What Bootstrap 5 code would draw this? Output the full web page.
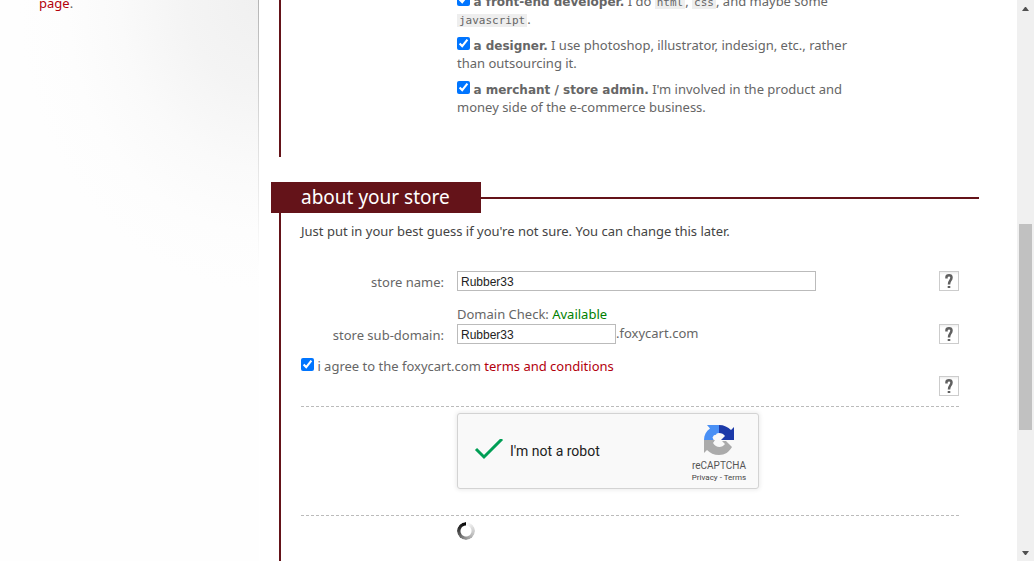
<!DOCTYPE html>
<html lang="en">
<head>
<meta charset="utf-8">
<meta name="viewport" content="width=device-width, initial-scale=1">
<title>FoxyCart - about your store</title>
<link rel="stylesheet" href="https://cdn.jsdelivr.net/npm/bootstrap@5.3.0/dist/css/bootstrap.min.css">
<style>
:root { --maroon: #641319; --red: #b3000c; }
body { font: 13px/18px "Noto Sans", Tahoma, sans-serif; color: #666; background: #fff; }
a { color: var(--red); text-decoration: none; }
strong { font-family: "DejaVu Sans", sans-serif; font-size: 12px; line-height: 12px; }
.page-shell { height: 100vh; }
.side-note { flex: 0 0 259px; padding-left: 39px; background: radial-gradient(ellipse 240px 290px at 100% 0, #f0f0f0 0, #f4f4f4 30%, #fafafa 58%, #fdfdfd 80%, #fefefe 100%); position: relative; }
.side-note p { margin-top: -6px; }
.side-note::after { content: ""; position: absolute; right: 0; top: 0; width: 1px; height: 270px; background: linear-gradient(#b5b5b5, #ddd 50%, #fff); }
.form-area { padding: 0 38px 0 20px; min-width: 0; }
.form-area form { min-height: 100%; }
.panel { border-left: 2px solid var(--maroon); padding: 0 20px; }
.panel-roles { display: flow-root; height: 157px; margin-bottom: 25px; }
.role-list { width: 400px; margin: -8px 0 0 156px; }
.role-list li { margin-bottom: 8px; }
.tick { width: 13px; height: 13px; margin: 0; vertical-align: 0; accent-color: #0075ff; }
code { font: 11px/12px "DejaVu Sans Mono", monospace; color: #666; background: #eee; padding: 0 2px; }
.panel-title { margin: 0 -20px 0 -30px; }
.panel-title h2 { width: 210px; height: 31px; margin: 0; padding-left: 30px; font-size: 19px; line-height: 31px; background: var(--maroon); color: #fff; font-weight: 400; }
.panel-title::after { content: ""; flex: 1; height: 2px; background: var(--maroon); }
.intro { color: #444; margin: 9px 0 31px; }
.field-row { display: grid; grid-template-columns: 144px 1fr 20px; column-gap: 12px; }
.field-row label { text-align: right; padding: 2px 1px 0 0; height: 20px; }
.row-name { margin-bottom: 14px; }
.row-check { margin-bottom: 1px; }
.available { color: #008000; }
.text-box { height: 20px; border: 1px solid #bbb; padding: 1px 3px 0; font: 12px "Liberation Sans", sans-serif; color: #222; }
.box-name { width: 359px; }
.box-domain { width: 159px; }
.help-btn { width: 20px; height: 20px; padding: 0; border: 1px solid #ccc; background: linear-gradient(#eee, #fff 3px); }
.help-btn svg { display: block; margin: auto; }
.agree-row { margin: 13px 0 1px; }
.help-end { margin-bottom: 10px; }
.dashed { border-top: 1px dashed #bbb; padding: 6px 0 26px 156px; }
.captcha { width: 302px; height: 76px; border: 1px solid #d3d3d3; border-radius: 3px; background: #f9f9f9; box-shadow: 0 0 4px 1px rgba(0,0,0,.08); font-family: Roboto, sans-serif; color: #222; padding-left: 16px; }
.captcha-text { font-size: 14px; padding-left: 6px; }
.captcha-brand { width: 78px; padding-top: 10px; color: #555; line-height: 12px; }
.captcha-brand svg { display: block; margin: 0 auto 4px; }
.brand-name { font-size: 10px; }
.brand-links, .brand-links a { font-size: 8px; color: #444; }
.spin-ring { width: 18px; height: 18px; border-radius: 50%; background: conic-gradient(#fff, #bbb 35%, #888 55%, #333 80%, #000); -webkit-mask: radial-gradient(circle, transparent 5px, #000 6px); mask: radial-gradient(circle, transparent 5px, #000 6px); }
.scroll-rail { flex: 0 0 17px; background: #f0f0f0; padding: 7px 0 6px; }
.rail-thumb { flex: 206; width: 13px; background: #c1c1c1; }
.rail-before { flex: 213; }
.rail-after { flex: 121; }
</style>
</head>
<body>
<svg class="d-none">
  <symbol id="question" viewBox="0 0 8 14"><path d="M1.500 4.500V3Q1.500 1.300 4 1.300T6.500 3.500Q6.500 5 5.300 6.500T4 10.500" fill="none" stroke="#606060" stroke-width="2.500"/><path d="M2.700 12h2.600v2H2.700z" fill="#606060"/></symbol>
</svg>
<div class="page-shell d-flex overflow-hidden">
  <aside class="side-note"><p class="mb-0"><a href="#">page</a>.</p></aside>
  <main class="form-area flex-grow-1 overflow-hidden">
    <form class="d-flex flex-column">
      <section class="panel panel-roles">
        <ul class="role-list list-unstyled">
          <li><input class="tick" type="checkbox" id="dev" checked> <label class="d-inline" for="dev"><strong>a front-end developer.</strong> I do <code>html</code>, <code>css</code>, and maybe some <code>javascript</code>.</label></li>
          <li><input class="tick" type="checkbox" id="des" checked> <label class="d-inline" for="des"><strong>a designer.</strong> I use photoshop, illustrator, indesign, etc., rather than outsourcing it.</label></li>
          <li><input class="tick" type="checkbox" id="mer" checked> <label class="d-inline" for="mer"><strong>a merchant / store admin.</strong> I'm involved in the product and money side of the e-commerce business.</label></li>
        </ul>
      </section>
      <section class="panel flex-grow-1">
        <div class="panel-title d-flex align-items-center"><h2>about your store</h2></div>
        <p class="intro">Just put in your best guess if you're not sure. You can change this later.</p>
        <div class="field-row row-name">
          <label for="sname">store name:</label>
          <div><input class="text-box box-name d-block" id="sname" type="text" value="Rubber33"></div>
          <button class="help-btn" type="button" aria-label="Help with store name"><svg width="8" height="14"><use href="#question"/></svg></button>
        </div>
        <div class="field-row row-check"><span></span><span>Domain Check: <span class="available">Available</span></span></div>
        <div class="field-row">
          <label for="sub">store sub-domain:</label>
          <div class="d-flex align-items-start"><input class="text-box box-domain" id="sub" type="text" value="Rubber33"><span>.foxycart.com</span></div>
          <button class="help-btn" type="button" aria-label="Help with store sub-domain"><svg width="8" height="14"><use href="#question"/></svg></button>
        </div>
        <div class="agree-row">
          <input class="tick" type="checkbox" id="agree" checked> <label class="d-inline" for="agree">i agree to the foxycart.com <a href="#">terms and conditions</a></label>
        </div>
        <div class="help-end d-flex justify-content-end"><button class="help-btn" type="button" aria-label="Help with terms"><svg width="8" height="14"><use href="#question"/></svg></button></div>
        <div class="dashed">
          <div class="captcha d-flex align-items-center">
            <svg width="30" height="24" viewBox="0 0 30 24"><path d="M2 10l8 8L28 0" fill="none" stroke="#009e55" stroke-width="3"/></svg>
            <span class="captcha-text me-auto">I'm not a robot</span>
            <div class="captcha-brand align-self-start text-center">
              <svg width="32" height="32" viewBox="0 0 32 32">
                <path d="M16 1H4l3 3.500C3 7.500 1 11 1 16h8q.5 1 2 2 0-2-1.500-4.500Q11 10 13 11q0-2 3-2z" fill="#4a90f5"/>
                <path d="M16 1c5 0 9 2 12 5l3-3v13H18l4-4q-2-3-6-3z" fill="#1c3aa9"/>
                <path d="M1 16h11l-2 3c3 5 9 5 12 1l-3-3h4l6 6c-3 5-7 8-13 8-5 0-9-2-12-5l-3 3z" fill="#ababab"/>
              </svg>
              <div class="brand-name">reCAPTCHA</div>
              <div class="brand-links"><a href="#">Privacy</a> - <a href="#">Terms</a></div>
            </div>
          </div>
        </div>
        <div class="dashed"><div class="spin-ring" role="status" aria-label="Loading"></div></div>
      </section>
    </form>
  </main>
  <div class="scroll-rail d-flex flex-column align-items-center" aria-hidden="true">
    <svg width="7" height="4"><path d="M0 4L3 0h1l3 4z" fill="#505050"/></svg>
    <div class="rail-before"></div><div class="rail-thumb"></div><div class="rail-after"></div>
    <svg width="7" height="4"><path d="M0 0h7L4 4H3z" fill="#505050"/></svg>
  </div>
</div>
<script src="https://cdn.jsdelivr.net/npm/bootstrap@5.3.0/dist/js/bootstrap.bundle.min.js"></script>
</body>
</html>
